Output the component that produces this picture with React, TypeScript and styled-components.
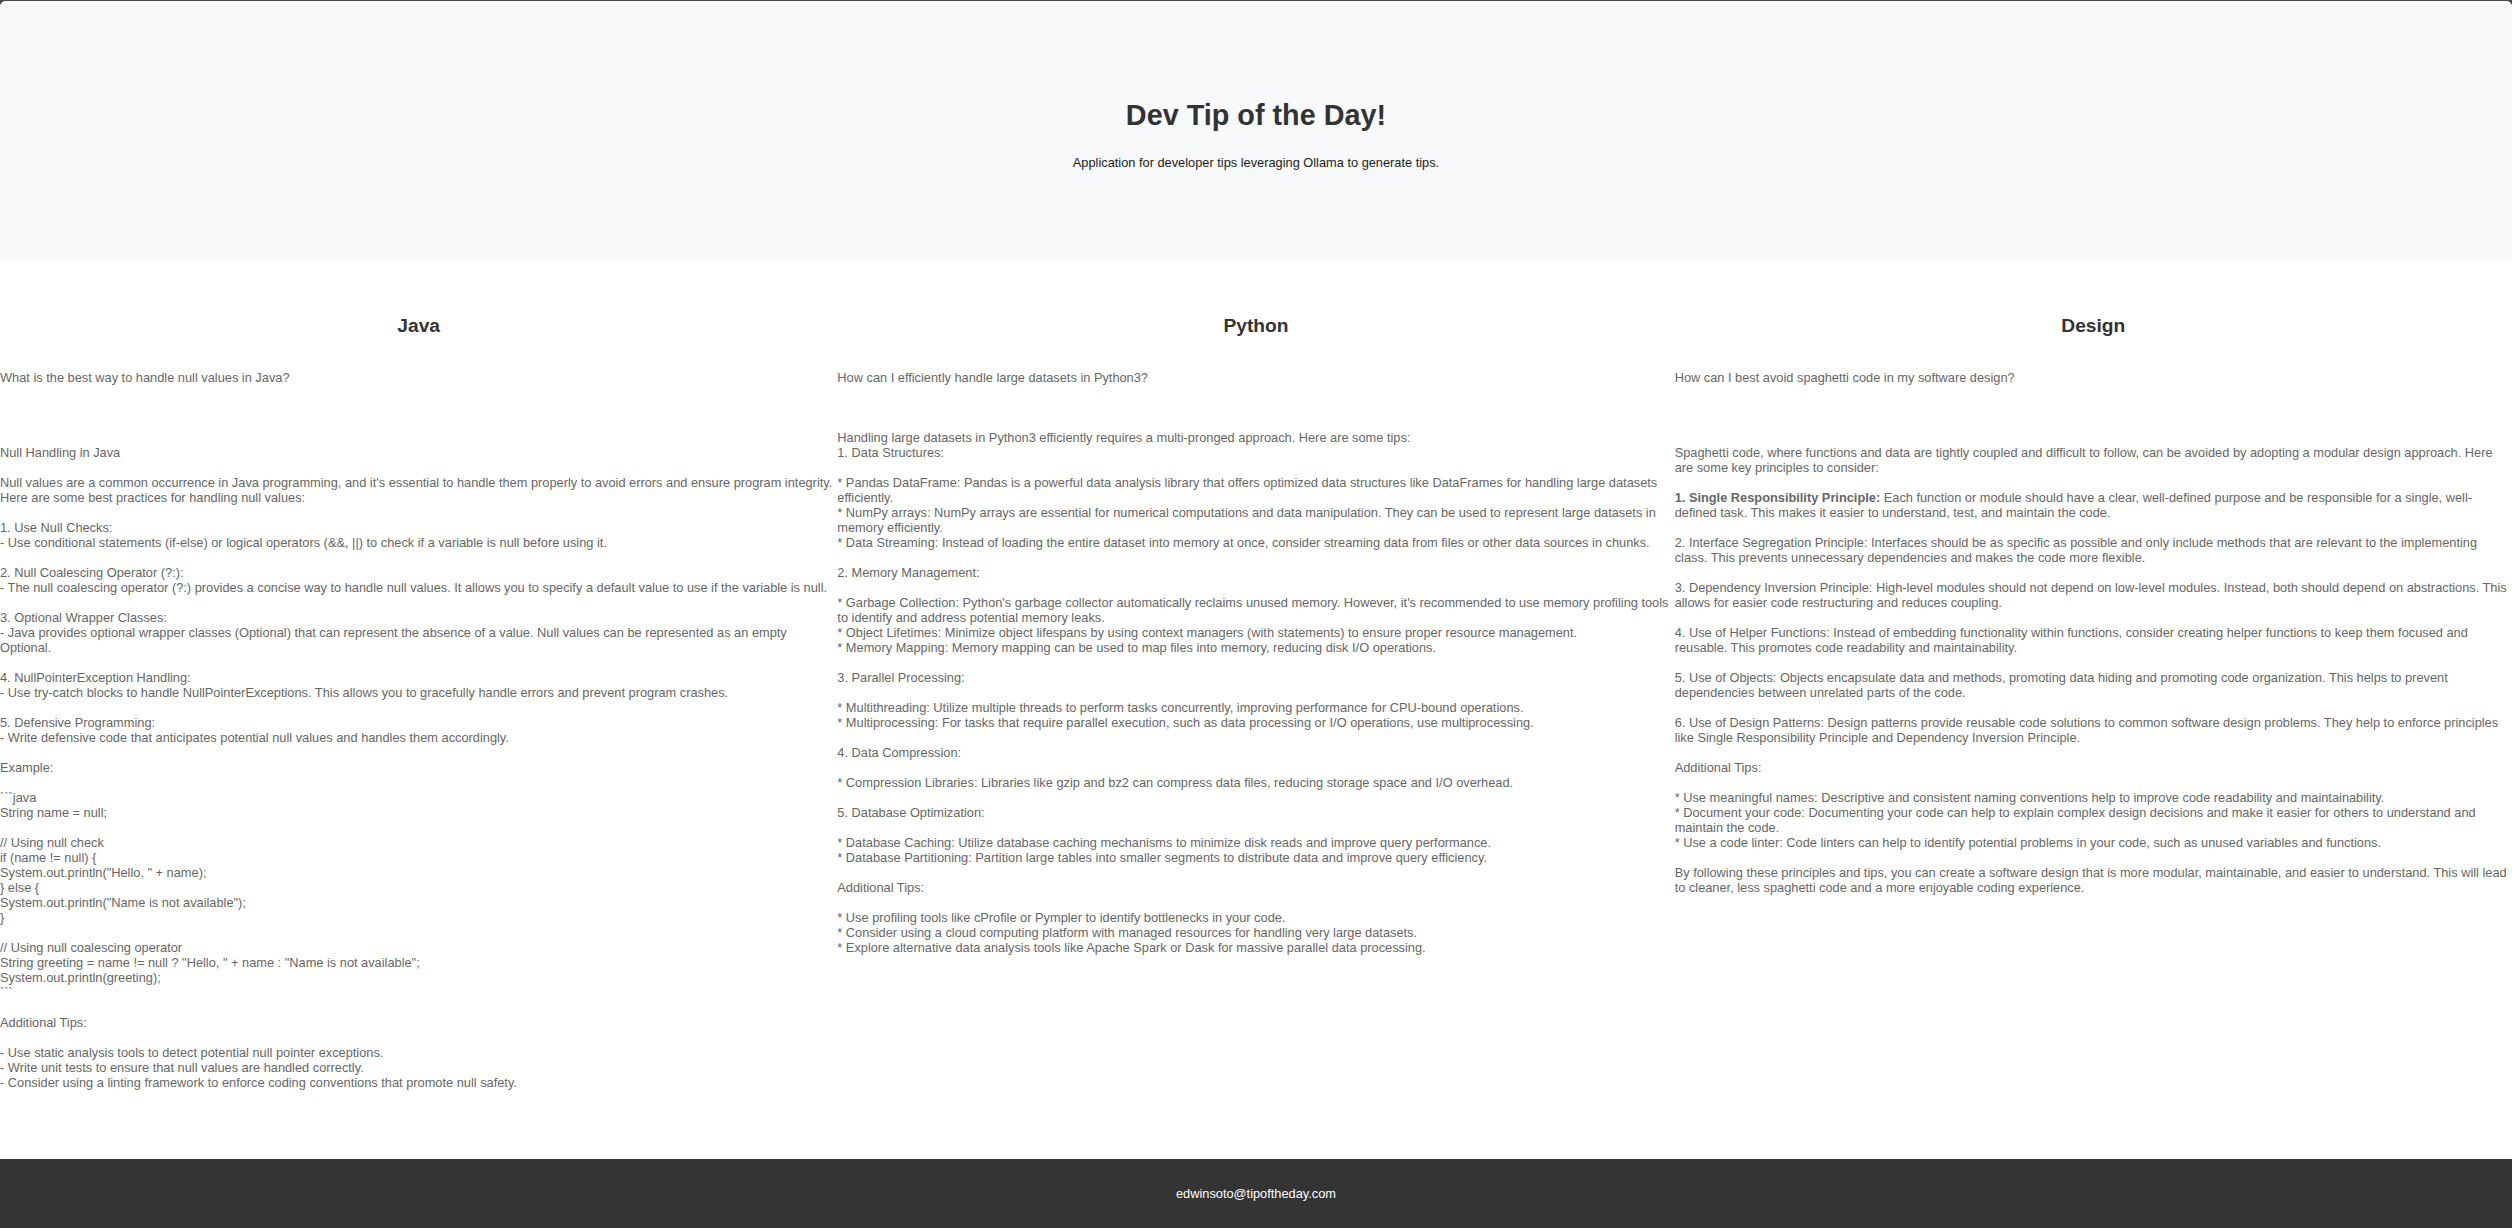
import * as React from 'react'
import styled, { createGlobalStyle } from 'styled-components'

const GlobalStyle = createGlobalStyle`
html, body {
margin: 0;
padding: 0;
background: #47474e;
}
body {
font-family: "Liberation Sans", Arial, Helvetica, sans-serif;
}
`

const Page = styled.div`
margin-top: 1px;
min-height: 1227px;
background: #ffffff;
border-radius: 6px 6px 0 0;
overflow: hidden;
display: flex;
flex-direction: column;
`
const Header = styled.header`
box-sizing: border-box;
height: 259px;
padding-top: 98px;
background: #f8f9fa;
text-align: center;
`
const Title = styled.h1`
margin: 0;
font-size: 28.8px;
line-height: 33px;
font-weight: 700;
color: #333333;
`
const Subtitle = styled.p`
margin: 23px 0 0;
font-size: 12.8px;
line-height: 15px;
color: #1c1c1c;
`
const Main = styled.main`
flex: 1;
display: grid;
grid-template-columns: repeat(3, 1fr);
padding-bottom: 69px;
`
const Column = styled.section`
min-width: 0;
font-size: 12.8px;
line-height: 15px;
color: #666666;
`
const ColumnTitle = styled.h2`
margin: 55px 0 0;
font-size: 19.2px;
line-height: 22px;
font-weight: 700;
text-align: center;
color: #333333;
`
const Question = styled.p`
margin: 33px 0 0;
`
const Answer = styled.div`
margin-top: 45px;
white-space: pre-wrap;
`
const Strong = styled.strong`
font-weight: 700;
`
const Footer = styled.footer`
height: 69px;
display: flex;
align-items: center;
justify-content: center;
background: #343434;
color: #ffffff;
font-size: 12.8px;
line-height: 15px;
`

interface Tip {
    topic: string
    question: string
    answer: string
}

const tips: Tip[] = [
    {
        topic: 'Java',
        question: 'What is the best way to handle null values in Java?',
        answer: `
Null Handling in Java

Null values are a common occurrence in Java programming, and it's essential to handle them properly to avoid errors and ensure program integrity.
Here are some best practices for handling null values:

1. Use Null Checks:
- Use conditional statements (if-else) or logical operators (&&, ||) to check if a variable is null before using it.

2. Null Coalescing Operator (?:):
- The null coalescing operator (?:) provides a concise way to handle null values. It allows you to specify a default value to use if the variable is null.

3. Optional Wrapper Classes:
- Java provides optional wrapper classes (Optional) that can represent the absence of a value. Null values can be represented as an empty
Optional.

4. NullPointerException Handling:
- Use try-catch blocks to handle NullPointerExceptions. This allows you to gracefully handle errors and prevent program crashes.

5. Defensive Programming:
- Write defensive code that anticipates potential null values and handles them accordingly.

Example:

\`\`\`java
String name = null;

// Using null check
if (name != null) {
System.out.println("Hello, " + name);
} else {
System.out.println("Name is not available");
}

// Using null coalescing operator
String greeting = name != null ? "Hello, " + name : "Name is not available";
System.out.println(greeting);
\`\`\`

Additional Tips:

- Use static analysis tools to detect potential null pointer exceptions.
- Write unit tests to ensure that null values are handled correctly.
- Consider using a linting framework to enforce coding conventions that promote null safety.`,
    },
    {
        topic: 'Python',
        question: 'How can I efficiently handle large datasets in Python3?',
        answer: `Handling large datasets in Python3 efficiently requires a multi-pronged approach. Here are some tips:
1. Data Structures:

* Pandas DataFrame: Pandas is a powerful data analysis library that offers optimized data structures like DataFrames for handling large datasets
efficiently.
* NumPy arrays: NumPy arrays are essential for numerical computations and data manipulation. They can be used to represent large datasets in
memory efficiently.
* Data Streaming: Instead of loading the entire dataset into memory at once, consider streaming data from files or other data sources in chunks.

2. Memory Management:

* Garbage Collection: Python's garbage collector automatically reclaims unused memory. However, it's recommended to use memory profiling tools
to identify and address potential memory leaks.
* Object Lifetimes: Minimize object lifespans by using context managers (with statements) to ensure proper resource management.
* Memory Mapping: Memory mapping can be used to map files into memory, reducing disk I/O operations.

3. Parallel Processing:

* Multithreading: Utilize multiple threads to perform tasks concurrently, improving performance for CPU-bound operations.
* Multiprocessing: For tasks that require parallel execution, such as data processing or I/O operations, use multiprocessing.

4. Data Compression:

* Compression Libraries: Libraries like gzip and bz2 can compress data files, reducing storage space and I/O overhead.

5. Database Optimization:

* Database Caching: Utilize database caching mechanisms to minimize disk reads and improve query performance.
* Database Partitioning: Partition large tables into smaller segments to distribute data and improve query efficiency.

Additional Tips:

* Use profiling tools like cProfile or Pympler to identify bottlenecks in your code.
* Consider using a cloud computing platform with managed resources for handling very large datasets.
* Explore alternative data analysis tools like Apache Spark or Dask for massive parallel data processing.`,
    },
    {
        topic: 'Design',
        question: 'How can I best avoid spaghetti code in my software design?',
        answer: `
Spaghetti code, where functions and data are tightly coupled and difficult to follow, can be avoided by adopting a modular design approach. Here
are some key principles to consider:

**1. Single Responsibility Principle:** Each function or module should have a clear, well-defined purpose and be responsible for a single, well-
defined task. This makes it easier to understand, test, and maintain the code.

2. Interface Segregation Principle: Interfaces should be as specific as possible and only include methods that are relevant to the implementing
class. This prevents unnecessary dependencies and makes the code more flexible.

3. Dependency Inversion Principle: High-level modules should not depend on low-level modules. Instead, both should depend on abstractions. This
allows for easier code restructuring and reduces coupling.

4. Use of Helper Functions: Instead of embedding functionality within functions, consider creating helper functions to keep them focused and
reusable. This promotes code readability and maintainability.

5. Use of Objects: Objects encapsulate data and methods, promoting data hiding and promoting code organization. This helps to prevent
dependencies between unrelated parts of the code.

6. Use of Design Patterns: Design patterns provide reusable code solutions to common software design problems. They help to enforce principles
like Single Responsibility Principle and Dependency Inversion Principle.

Additional Tips:

* Use meaningful names: Descriptive and consistent naming conventions help to improve code readability and maintainability.
* Document your code: Documenting your code can help to explain complex design decisions and make it easier for others to understand and
maintain the code.
* Use a code linter: Code linters can help to identify potential problems in your code, such as unused variables and functions.

By following these principles and tips, you can create a software design that is more modular, maintainable, and easier to understand. This will lead
to cleaner, less spaghetti code and a more enjoyable coding experience.`,
    },
]

// only **bold** is rendered, the rest stays as plain text
const renderAnswer = (text: string) =>
    text.split(/(\*\*[^*]+\*\*)/g).map((part, index) =>
        part.startsWith('**') && part.endsWith('**')
            ? <Strong key={index}>{part.slice(2, -2)}</Strong>
            : <React.Fragment key={index}>{part}</React.Fragment>
    )

export default function App() {
    return (
        <>
            <GlobalStyle />
            <Page>
                <Header>
                    <Title>Dev Tip of the Day!</Title>
                    <Subtitle>Application for developer tips leveraging Ollama to generate tips.</Subtitle>
                </Header>
                <Main>
                    {tips.map(tip => (
                        <Column key={tip.topic}>
                            <ColumnTitle>{tip.topic}</ColumnTitle>
                            <Question>{tip.question}</Question>
                            <Answer>{renderAnswer(tip.answer)}</Answer>
                        </Column>
                    ))}
                </Main>
                <Footer>edwinsoto@tipoftheday.com</Footer>
            </Page>
        </>
    )
}
